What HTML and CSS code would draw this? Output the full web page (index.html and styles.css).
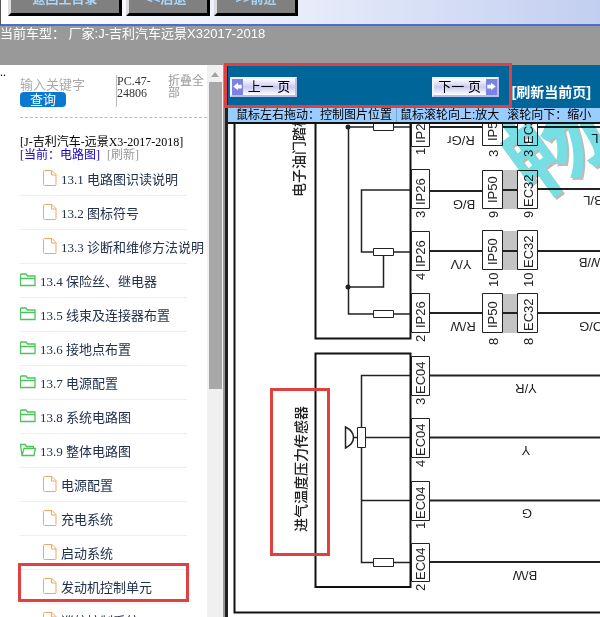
FILE: index.html
```html
<!DOCTYPE html>
<html lang="zh-CN">
<head>
    <meta charset="UTF-8">
    <meta name="viewport" content="width=device-width, initial-scale=1.0">
    <title>J-吉利汽车远景X3 2017-2018</title>
    <link rel="stylesheet" href="styles.css">
</head>
<body>
    <header class="topbar">
        <button type="button">返回主目录</button>
        <button type="button" class="small">&lt;&lt;后退·</button>
        <button type="button" class="small">&gt;&gt;前进</button>
    </header>
    <div class="model">当前车型： 厂家:J-吉利汽车远景X32017-2018</div>

    <div class="main">
        <nav class="sidebar">
            <span class="dots">..</span>
            <div class="content">
                <form class="search">
                    <div class="query">
                        <input type="text" placeholder="输入关键字" aria-label="输入关键字">
                        <button type="button">查询</button>
                    </div>
                    <span class="code">PC.47-24806</span>
                    <a href="#" class="fold">折叠全部</a>
                </form>
                <div class="path">
                    <div>[J-吉利汽车-远景X3-2017-2018]</div>
                    <div><a href="#" class="current">[当前：电路图]</a> <a href="#" class="reload">[刷新]</a></div>
                </div>
                <ul class="tree">
                    <li class="leaf"><a href="#"><svg class="icon file"><use href="#file"/></svg>13.1 电路图识读说明</a></li>
                    <li class="leaf"><a href="#"><svg class="icon file"><use href="#file"/></svg>13.2 图标符号</a></li>
                    <li class="leaf"><a href="#"><svg class="icon file"><use href="#file"/></svg>13.3 诊断和维修方法说明</a></li>
                    <li><a href="#"><svg class="icon"><use href="#folder"/></svg>13.4 保险丝、继电器</a></li>
                    <li><a href="#"><svg class="icon"><use href="#folder"/></svg>13.5 线束及连接器布置</a></li>
                    <li><a href="#"><svg class="icon"><use href="#folder"/></svg>13.6 接地点布置</a></li>
                    <li><a href="#"><svg class="icon"><use href="#folder"/></svg>13.7 电源配置</a></li>
                    <li><a href="#"><svg class="icon"><use href="#folder"/></svg>13.8 系统电路图</a></li>
                    <li><a href="#"><svg class="icon"><use href="#folder-open"/></svg>13.9 整体电路图</a></li>
                    <li class="leaf"><a href="#"><svg class="icon file"><use href="#file"/></svg>电源配置</a></li>
                    <li class="leaf"><a href="#"><svg class="icon file"><use href="#file"/></svg>充电系统</a></li>
                    <li class="leaf"><a href="#"><svg class="icon file"><use href="#file"/></svg>启动系统</a></li>
                    <li class="leaf marked"><a href="#"><svg class="icon file"><use href="#file"/></svg>发动机控制单元</a></li>
                    <li class="leaf"><a href="#"><svg class="icon file"><use href="#file"/></svg>巡航控制系统</a></li>
                </ul>
            </div>
            <div class="scrollbar">
                <span class="arrow"></span>
                <span class="thumb"></span>
            </div>
        </nav>

        <section class="viewer">
            <div class="pager">
                <button type="button" class="prev"><svg viewBox="0 0 11 17"><path d="M1 8l5-4v2h4v4H6v2z"/></svg><span>上一 页</span></button>
                <button type="button" class="next"><span>下一 页</span><svg viewBox="0 0 11 17"><path d="M10 8l-5-4v2H1v4h4v2z"/></svg></button>
                <a href="#">[刷新当前页]</a>
            </div>
            <div class="hint">
                <span>鼠标左右拖动：控制图片位置</span>
                <span class="sep">鼠标滚轮向上:放大</span>
                <span class="zoom-out">滚轮向下：缩小</span>
            </div>
            <svg class="diagram" viewBox="228 124 372 493" preserveAspectRatio="xMinYMin slice">
                <!-- sheet frame -->
                <path class="thick" d="M234.5 120V612.5H1200"/>

                <!-- accelerator pedal module -->
                <path class="thick" d="M315.5 120V338.5H410.5V120"/>
                <path class="wire" d="M348.5 127H373M393 127H410M348.5 127V314H373M393 314H410M410 190H361.5V252H373M393 252H410M383.5 256V287H348.5"/>
                <path class="box" d="M373.5 123.5h20v7h-20zM373.5 248.5h20v7h-20zM373.5 310.5h20v7h-20z"/>
                <circle cx="348" cy="127" r="2.5"/>
                <circle cx="348" cy="287" r="2.5"/>
                <text class="name" transform="translate(304 197) rotate(-90)">电子油门踏板</text>

                <path class="fill" d="M502 170h16v39h-16zM502 231h16v39h-16zM502 294h16v39h-16z"/>
                <path class="cable" d="M430 127H483M502 127H518M537 127H1200M430 191H483M502 190H518M537 189H1200M430 251H483M502 251H518M537 251H1200M430 313H483M502 313H518M537 313H1200"/>
                <path class="box" d="M411.5 107.5h18v39h-18zM411.5 169.5h18v39h-18zM411.5 231.5h18v39h-18zM411.5 293.5h18v39h-18z"/>
                <path class="box" d="M482.5 107.5h20v38h-20zM482.5 170.5h20v38h-20zM482.5 230.5h20v39h-20zM482.5 293.5h20v39h-20z"/>
                <path class="box" d="M517.5 107.5h20v38h-20zM517.5 170.5h20v38h-20zM517.5 230.5h20v39h-20zM517.5 293.5h20v39h-20z"/>

                <g class="pins">
                    <text transform="translate(425 143) rotate(-90)">IP26</text>
                    <text transform="translate(425 205) rotate(-90)">IP26</text>
                    <text transform="translate(425 267) rotate(-90)">IP26</text>
                    <text transform="translate(425 328) rotate(-90)">IP26</text>
                    <text transform="translate(425 155) rotate(-90)">1</text>
                    <text transform="translate(425 218) rotate(-90)">3</text>
                    <text transform="translate(425 280) rotate(-90)">4</text>
                    <text transform="translate(425 342) rotate(-90)">2</text>

                    <text transform="translate(497 141) rotate(-90)">IP50</text>
                    <text transform="translate(497 203) rotate(-90)">IP50</text>
                    <text transform="translate(497 265) rotate(-90)">IP50</text>
                    <text transform="translate(497 328) rotate(-90)">IP50</text>
                    <text transform="translate(498 157) rotate(-90)">3</text>
                    <text transform="translate(498 218) rotate(-90)">9</text>
                    <text transform="translate(498 287) rotate(-90)">10</text>
                    <text transform="translate(498 345) rotate(-90)">8</text>

                    <text transform="translate(533 144) rotate(-90)">EC32</text>
                    <text transform="translate(533 207) rotate(-90)">EC32</text>
                    <text transform="translate(533 268) rotate(-90)">EC32</text>
                    <text transform="translate(533 331) rotate(-90)">EC32</text>
                    <text transform="translate(533 157) rotate(-90)">3</text>
                    <text transform="translate(533 218) rotate(-90)">9</text>
                    <text transform="translate(533 287) rotate(-90)">10</text>
                    <text transform="translate(533 345) rotate(-90)">8</text>
                </g>

                <g class="colors">
                    <text transform="translate(461 136) rotate(180)">R/Gr</text>
                    <text transform="translate(464 200) rotate(180)">B/G</text>
                    <text transform="translate(461 260) rotate(180)">Y/V</text>
                    <text transform="translate(463 322) rotate(180)">R/W</text>
                    <text transform="translate(595 134) rotate(180)">L</text>
                    <text transform="translate(593 196) rotate(180)">B/L</text>
                    <text transform="translate(591 258) rotate(180)">W/B</text>
                    <text transform="translate(591 322) rotate(180)">O/G</text>
                    <text transform="translate(526 384) rotate(180)">Y/R</text>
                    <text transform="translate(526 446) rotate(180)">Y</text>
                    <text transform="translate(527 509) rotate(180)">G</text>
                    <text transform="translate(525 571) rotate(180)">B/W</text>
                </g>

                <!-- intake temperature / pressure sensor -->
                <path class="thick" d="M315.5 353.5H410.5V587H315.5z"/>
                <path class="wire" d="M410 375.5H361.5V562.5H373M393 562.5H410M353 437.5H410M361.5 500.5H410"/>
                <path class="box" d="M357.5 427.5h8v20h-8zM373.5 558.5h20v8h-20z"/>
                <path class="box cap" d="M345.5 427q8 4 8 10.5t-8 10.5z"/>
                <path class="cable" d="M430 375.5H1200M430 437.5H1200M430 500.5H1200M430 562H1200"/>
                <path class="box" d="M411.5 356.5h18v39h-18zM411.5 418.5h18v39h-18zM411.5 481.5h18v39h-18zM411.5 543.5h18v38h-18z"/>
                <g class="pins">
                    <text transform="translate(425 394) rotate(-90)">EC04</text>
                    <text transform="translate(425 456) rotate(-90)">EC04</text>
                    <text transform="translate(425 519) rotate(-90)">EC04</text>
                    <text transform="translate(425 580) rotate(-90)">EC04</text>
                    <text transform="translate(425 405) rotate(-90)">3</text>
                    <text transform="translate(425 467) rotate(-90)">4</text>
                    <text transform="translate(425 529) rotate(-90)">1</text>
                    <text transform="translate(425 591) rotate(-90)">2</text>
                </g>
                <text class="name" transform="translate(306 532) rotate(-90)">进气温度压力传感器</text>
                <rect class="mark" x="271.5" y="389.5" width="57" height="165"/>

                <!-- watermark -->
                <g class="watermark">
                    <text class="shade" transform="translate(538 203) rotate(-36)">畅</text>
                    <text transform="translate(536 201) rotate(-36)">畅</text>
                </g>
            </svg>
        </section>
    </div>

    <svg class="defs">
        <symbol id="file" viewBox="0 0 14 16">
            <path d="M1.5 .5h7.500l4 4v10q0 1-1 1h-10.500q-1 0-1-1v-13q0-1 1-1zM8.500 .5v4.500h4.500" fill="none" stroke="#f2a663"/>
        </symbol>
        <symbol id="folder" viewBox="0 0 16 16">
            <path d="M1.5 2h4.500l1.500 2h7.500v9.500h-14.500v-10.500q0-1 1-1zM.5 6.500h14.500" fill="none" stroke="#4cc45c" stroke-width="1.3"/>
        </symbol>
        <symbol id="folder-open" viewBox="0 0 16 16">
            <path d="M2 13.500l-1.500-11h4.500l1.500 2h7v2M2 13.500l2-7h11.500l-1.500 7z" fill="none" stroke="#4cc45c" stroke-width="1.3"/>
        </symbol>
    </svg>
</body>
</html>
```

FILE: styles.css
```css
* { box-sizing: border-box; }
body {
    margin: 0;
    height: 100vh;
    display: flex;
    flex-direction: column;
    overflow: hidden;
    background: white;
    font-family: "Liberation Sans", "Noto Sans CJK SC", sans-serif;
    font-size: 13px;
}
a { text-decoration: none; }
button, input { font-family: inherit; }

.topbar {
    height: 26px;
    flex: none;
    display: flex;
    align-items: flex-end;
    gap: 4px;
    padding: 0 7px 8px;
    overflow: hidden;
    border-left: 1px solid #555;
    border-bottom: 2px solid #4a6fd0;
    background: linear-gradient(to right, #ffffff, #e8ecfa 50%, #c2cef0);
}
.topbar button {
    width: 114px;
    height: 32px;
    padding: 0 0 2px;
    border: 3px solid #000;
    border-left-color: #ddd;
    border-top-color: #ddd;
    background: #808080;
    color: #a9d4f5;
    font-size: 13px;
    font-weight: bold;
    line-height: 18px;
}
.topbar .small { width: 84px; }

.model {
    height: 39px;
    flex: none;
    background: #999;
    color: white;
    line-height: 15px;
}

.main {
    flex: 1;
    min-height: 0;
    display: flex;
}

/* left side: chapter tree */
.sidebar {
    width: 225px;
    flex: none;
    display: flex;
    border-right: 2px solid #999;
    font-family: "Liberation Serif", "Noto Sans CJK SC", serif;
}
.dots { width: 20px; font-size: 12px; line-height: 14px; }
.content { width: 187px; }
.search {
    height: 53px;
    display: flex;
    padding-top: 10px;
    border-bottom: 1px dashed #bbb;
    font-size: 12px;
    line-height: 12px;
}
.query { width: 96px; padding-top: 2px; }
.query input {
    display: block;
    width: 90px;
    height: 15px;
    padding: 0;
    border: none;
    font-size: 13px;
}
.query input::placeholder { color: #aaa; }
.query button {
    display: block;
    width: 46px;
    height: 15px;
    padding: 0;
    border: none;
    border-radius: 4px;
    background: #0b78d0;
    color: white;
    font-size: 13px;
    line-height: 15px;
}
.code {
    width: 52px;
    height: 32px;
    padding-right: 12px;
    border-left: 1px solid #bbb;
    color: #333;
}
.fold { width: 39px; color: #999; }
.path {
    padding-top: 18px;
    font-size: 12px;
    line-height: 13px;
    white-space: nowrap;
}
.current { color: #1a00c8; }
.reload { margin-left: 4px; color: #999; }
.tree {
    margin: 0;
    padding: 0;
    list-style: none;
}
.tree li {
    position: relative;
    width: 167px;
    height: 34px;
    border-bottom: 1px solid #eee;
}
.tree a {
    display: flex;
    align-items: center;
    gap: 4px;
    height: 32px;
    color: #20304d;
    white-space: nowrap;
}
.tree .leaf a { padding-left: 23px; }
.icon { width: 16px; height: 16px; flex: none; }
.file { width: 14px; }
.marked::after {
    content: "";
    position: absolute;
    inset: -7px -2px 1px;
    border: 3px solid #e0403f;
}

.scrollbar {
    flex: 1;
    display: flex;
    flex-direction: column;
    align-items: center;
    background: #f0f0f0;
}
.arrow {
    margin: 7px 0 5px;
    border: 4px solid transparent;
    border-top: none;
    border-bottom: 5px solid #a3a3a3;
}
.thumb {
    width: 13px;
    height: 307px;
    background: #a8a8a8;
}

/* right side: wiring diagram */
.viewer {
    flex: 1;
    min-width: 0;
    display: flex;
    flex-direction: column;
    border-left: 3px solid #222;
}
.pager {
    position: relative;
    height: 43px;
    flex: none;
    display: flex;
    align-items: center;
    padding: 0 9px 0 2px;
    background: #069;
}
.pager::after {
    content: "";
    position: absolute;
    inset: -2px 88px 0 -4px;
    border: 3px solid #e0403f;
    pointer-events: none;
}
.pager button {
    width: 67px;
    height: 20px;
    display: flex;
    padding: 0;
    border: 2px solid #f4f4ff;
    border-right-color: #b9bde6;
    border-bottom-color: #b9bde6;
    background: linear-gradient(#fff, #c9c9f2 50%, #fff);
    color: #000;
    font-size: 13px;
    line-height: 16px;
}
.pager button span { flex: 1; white-space: nowrap; }
.pager button svg {
    width: 11px;
    height: 16px;
    flex: none;
    background: #7b83e0;
    fill: white;
}
.pager .next { margin-left: auto; }
.pager a {
    margin: 8px 0 0 13px;
    color: white;
    font-size: 14px;
    font-weight: bold;
}
.hint {
    height: 16px;
    flex: none;
    display: flex;
    padding-left: 8px;
    border-bottom: 2px solid #111;
    background: #9cf;
    font-size: 12px;
    line-height: 14px;
    white-space: nowrap;
}
.sep {
    margin-left: 4px;
    padding-left: 3px;
    border-left: 1px solid #7aa3d0;
}
.zoom-out { margin-left: 8px; }

.diagram {
    flex: 1;
    min-height: 0;
    width: 100%;
    font-size: 13px;
    fill: #222;
}
.thick { fill: none; stroke: #111; stroke-width: 2; }
.wire { fill: none; stroke: #222; stroke-width: 1.5; }
.cable { fill: none; stroke: #222; stroke-width: 2; }
.box { fill: white; stroke: #222; }
.cap { stroke-width: 1.5; }
.fill { fill: #c4c4c4; }
.name { font-size: 14px; font-weight: 500; }
.colors { text-anchor: middle; }
.mark { fill: none; stroke: #e0403f; stroke-width: 3; }
.watermark {
    fill: #5fd8de;
    opacity: 0.85;
    mix-blend-mode: multiply;
    font-family: "Noto Sans CJK SC", sans-serif;
    font-size: 96px;
    font-weight: 700;
}
.watermark .shade { fill: #b9aaa6; }

.defs { position: absolute; width: 0; height: 0; }
```
